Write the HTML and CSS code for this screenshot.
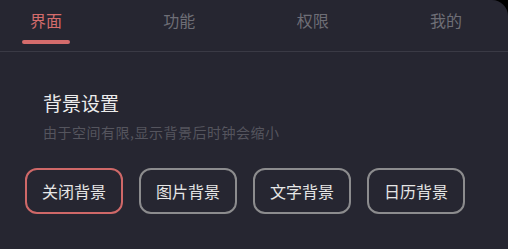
FILE: index.html
```html
<!DOCTYPE html>
<html lang="zh">
<head>
<meta charset="utf-8">
<link rel="stylesheet" href="styles.css">
</head>
<body>
<div class="panel">
  <nav class="tabs">
    <div class="tab active">界面</div>
    <div class="tab">功能</div>
    <div class="tab">权限</div>
    <div class="tab">我的</div>
  </nav>
  <section class="content">
    <h2 class="title">背景设置</h2>
    <p class="desc">由于空间有限,显示背景后时钟会缩小</p>
    <div class="options">
      <button class="opt selected">关闭背景</button>
      <button class="opt">图片背景</button>
      <button class="opt">文字背景</button>
      <button class="opt">日历背景</button>
    </div>
  </section>
</div>
</body>
</html>
```

FILE: styles.css
```css
html, body {
  margin: 0;
  padding: 0;
  background: #000;
  width: 508px;
  height: 249px;
  overflow: hidden;
}
body {
  font-family: "Noto Sans CJK SC", "Noto Sans", sans-serif;
}
.panel {
  width: 508px;
  height: 249px;
  background: #262631;
  border-top-right-radius: 16px;
  box-sizing: border-box;
}
.tabs {
  display: flex;
  justify-content: space-between;
  padding: 0 46px 0 30px;
  height: 51px;
  border-bottom: 1px solid #3a3a45;
}
.tab {
  position: relative;
  font-size: 16px;
  line-height: 20px;
  padding-top: 10px;
  color: #6e6e76;
}
.tab.active {
  color: #d56c6c;
}
.tab.active::after {
  content: "";
  position: absolute;
  left: -8px;
  right: -8px;
  top: 40px;
  height: 4px;
  border-radius: 2px;
  background: #d56c6c;
}
.content {
  padding: 0 25px;
}
.title {
  margin: 38px 0 0 18px;
  font-size: 19px;
  line-height: 26px;
  font-weight: 400;
  color: #ececec;
}
.desc {
  margin: 7px 0 0 18px;
  font-size: 14px;
  line-height: 18px;
  letter-spacing: 0.5px;
  color: #55555e;
}
.options {
  display: flex;
  gap: 16px;
  margin-top: 27px;
}
.opt {
  width: 98px;
  height: 46px;
  box-sizing: border-box;
  border: 2px solid #8c8c8e;
  border-radius: 12px;
  background: transparent;
  color: #e6e6e6;
  font-family: "Noto Sans CJK SC", "Noto Sans", sans-serif;
  font-size: 16px;
  padding: 0;
}
.opt.selected {
  border-color: #cf6868;
}
```
